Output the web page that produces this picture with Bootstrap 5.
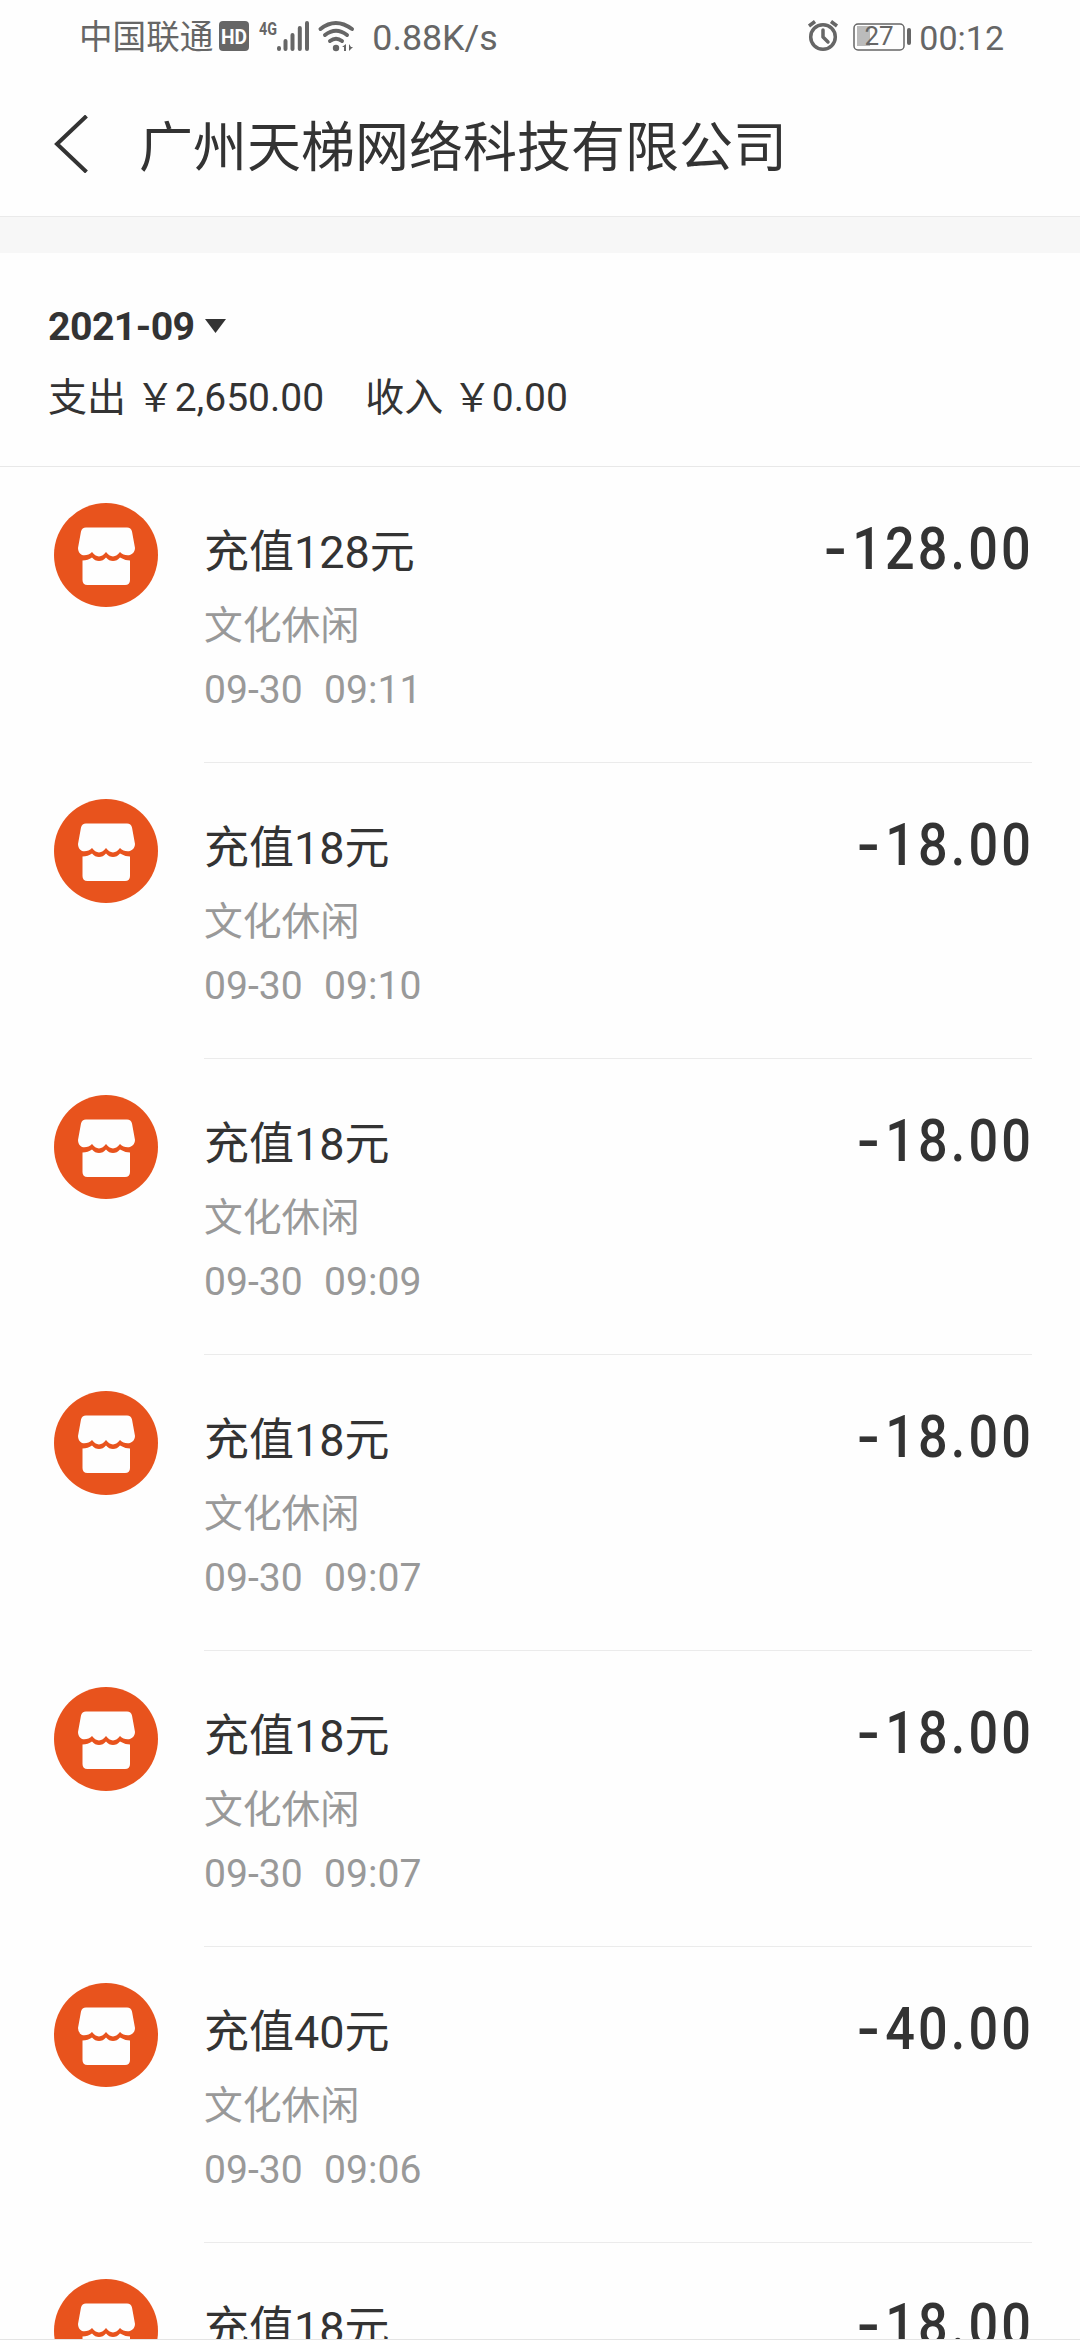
<!DOCTYPE html>
<html lang="zh-CN">
<head>
<meta charset="utf-8">
<meta name="viewport" content="width=device-width, initial-scale=1">
<title>广州天梯网络科技有限公司</title>
<link href="https://cdn.jsdelivr.net/npm/bootstrap@5.3.0/dist/css/bootstrap.min.css" rel="stylesheet">
<style>
body{font-family:Roboto,"Noto Sans CJK SC",sans-serif;color:#333;background:#fefefe}
.screen{width:1080px;height:2340px;background:#fefefe}
.statusbar{height:74px;padding:0 76px 0 79px;color:#666;font-size:35.8px;line-height:76px}
.carrier{font-size:33.6px}
.speed{margin-left:17px}
.clock{font-size:34px;margin-left:4px}
.topbar{height:142px;padding-left:54px}
.back{margin-top:41px}
.page-title{font-size:54px;line-height:80px;margin:35px 0 0 51px;font-weight:400}
.band{height:37px;background:#f7f7f7;border-top:1px solid #eaeaea}
.summary{height:214px;padding:54px 48px 0;border-bottom:1px solid #e8e8e8}
.month{font-size:39.3px;line-height:40px;font-weight:700;letter-spacing:-.6px}
.caret{margin:-3px 0 0 10px}
.totals{font-size:39px;line-height:58px;margin-top:22px;gap:41px}
.entry{height:296px;padding:36px 48px 0 54px}
.shop{width:104px;height:104px;margin-right:46px}
.entry-body{height:260px;border-bottom:1px solid #ebebeb}
.item-name{font-size:45px;line-height:60px;margin-top:20px}
.item-sub{font-size:38.8px;line-height:50px;color:#999}
.kind{margin-top:18px}
.when{font-size:39.1px;margin-top:14px;white-space:pre;word-spacing:1px}
.amount{font-size:60px;font-weight:500;line-height:60px;letter-spacing:3.6px;transform:scaleX(.87);transform-origin:right;margin:16px -2px 0 0}
.minus{display:inline-block;transform:scaleX(1.28);transform-origin:center;margin-right:5px}
.footline{height:1px;background:#e4e4e4}
</style>
<script src="https://cdn.jsdelivr.net/npm/bootstrap@5.3.0/dist/js/bootstrap.bundle.min.js"></script>
</head>
<body>
<svg class="d-none">
  <symbol id="shop" viewBox="0 0 104 104">
    <circle cx="52" cy="52" r="52" fill="#e8531d"/>
    <path fill="#fefefe" d="M32 24.500H73Q77 24.500 78 28.500L81 45Q81 50 76 52Q70 53 66 49Q63 53 59 53.500Q55 53 52 49Q49 53 45 53.500Q41 53 38 49Q34 53 28 52Q24 50 24 45L27 28.500Q28 24.500 32 24.500Z"/>
    <path fill="#fefefe" d="M28.500 57.500Q34 57.500 38 54.500Q41 58 45 58Q49 58 52 54.500Q55 58 59 58Q63 58 66 54.500Q71 57.500 76 57.500V77Q76 82 71 82H33.500Q28.500 82 28.500 77Z"/>
  </symbol>
</svg>
<div class="screen d-flex flex-column overflow-hidden">
  <header class="statusbar d-flex justify-content-between flex-shrink-0">
    <div class="d-flex">
      <span class="carrier">中国联通</span>
      <svg width="142" height="74" viewBox="0 0 142 74" fill="#666">
        <rect x="6" y="21" width="30" height="30" rx="4"/>
        <text x="21" y="43.500" font-size="20" font-weight="700" text-anchor="middle" textLength="26" lengthAdjust="spacingAndGlyphs" fill="#fefefe">HD</text>
        <text x="46" y="34.500" font-size="18.500" font-weight="700" textLength="18" lengthAdjust="spacingAndGlyphs">4G</text>
        <g stroke="#666" stroke-width="4" stroke-linecap="round"><path d="M66 48v1M72.500 41v8M79.500 35v14M86.800 28v21M94 23v26"/></g>
        <g fill="none" stroke="#666" stroke-width="4" stroke-linecap="round"><path d="M107.500 29Q122.500 17 139 29M112 35Q123 26.500 134 35M117 41Q123 36.500 129 41"/></g>
        <circle cx="123" cy="48" r="3.200"/><path d="M129 47l4-3v7h-2v-4zM136 44v7l4-4h-2z"/>
      </svg>
      <span class="speed">0.88K/s</span>
    </div>
    <div class="d-flex">
      <svg width="112" height="74" viewBox="0 0 112 74" fill="none" stroke="#666">
        <circle cx="20" cy="37" r="12.300" stroke-width="3.500"/>
        <path d="M20 30v7l5 5" stroke-width="3.500" stroke-linecap="round" stroke-linejoin="round"/>
        <path d="M6 26l6-4.500M34 26l-6-4.500" stroke-width="3.500"/>
        <rect x="51" y="24" width="50" height="26" rx="4" stroke-width="1.500"/>
        <rect x="54" y="26" width="13" height="20" fill="#bbb" stroke="none"/>
        <text x="76" y="45" font-size="26" text-anchor="middle" fill="#666" stroke="none">27</text>
        <path d="M106 30v13" stroke-width="4" stroke-linecap="round"/>
      </svg>
      <span class="clock">00:12</span>
    </div>
  </header>
  <nav class="topbar d-flex align-items-start flex-shrink-0">
    <svg class="back" width="34" height="58" viewBox="0 0 34 58"><path d="M32.500 1L3 29L32.500 57" fill="none" stroke="#333" stroke-width="4"/></svg>
    <h1 class="page-title">广州天梯网络科技有限公司</h1>
  </nav>
  <div class="band flex-shrink-0"></div>
  <section class="summary flex-shrink-0">
    <div class="month d-flex align-items-center">2021-09<svg class="caret" width="21" height="14"><path d="M0 0H21L10.500 14Z" fill="#333"/></svg></div>
    <div class="totals d-flex"><span>支出 ￥2,650.00</span><span>收入 ￥0.00</span></div>
  </section>
  <main class="flex-grow-1 overflow-hidden">
    <article class="entry d-flex"><svg class="shop flex-shrink-0"><use href="#shop"/></svg><div class="entry-body d-flex flex-grow-1 justify-content-between"><div><div class="item-name">充值128元</div><div class="item-sub kind">文化休闲</div><div class="item-sub when">09-30  09:11</div></div><div class="amount"><span class="minus">-</span>128.00</div></div></article>
    <article class="entry d-flex"><svg class="shop flex-shrink-0"><use href="#shop"/></svg><div class="entry-body d-flex flex-grow-1 justify-content-between"><div><div class="item-name">充值18元</div><div class="item-sub kind">文化休闲</div><div class="item-sub when">09-30  09:10</div></div><div class="amount"><span class="minus">-</span>18.00</div></div></article>
    <article class="entry d-flex"><svg class="shop flex-shrink-0"><use href="#shop"/></svg><div class="entry-body d-flex flex-grow-1 justify-content-between"><div><div class="item-name">充值18元</div><div class="item-sub kind">文化休闲</div><div class="item-sub when">09-30  09:09</div></div><div class="amount"><span class="minus">-</span>18.00</div></div></article>
    <article class="entry d-flex"><svg class="shop flex-shrink-0"><use href="#shop"/></svg><div class="entry-body d-flex flex-grow-1 justify-content-between"><div><div class="item-name">充值18元</div><div class="item-sub kind">文化休闲</div><div class="item-sub when">09-30  09:07</div></div><div class="amount"><span class="minus">-</span>18.00</div></div></article>
    <article class="entry d-flex"><svg class="shop flex-shrink-0"><use href="#shop"/></svg><div class="entry-body d-flex flex-grow-1 justify-content-between"><div><div class="item-name">充值18元</div><div class="item-sub kind">文化休闲</div><div class="item-sub when">09-30  09:07</div></div><div class="amount"><span class="minus">-</span>18.00</div></div></article>
    <article class="entry d-flex"><svg class="shop flex-shrink-0"><use href="#shop"/></svg><div class="entry-body d-flex flex-grow-1 justify-content-between"><div><div class="item-name">充值40元</div><div class="item-sub kind">文化休闲</div><div class="item-sub when">09-30  09:06</div></div><div class="amount"><span class="minus">-</span>40.00</div></div></article>
    <article class="entry d-flex"><svg class="shop flex-shrink-0"><use href="#shop"/></svg><div class="entry-body d-flex flex-grow-1 justify-content-between"><div><div class="item-name">充值18元</div></div><div class="amount"><span class="minus">-</span>18.00</div></div></article>
  </main>
  <div class="footline flex-shrink-0"></div>
</div>
</body>
</html>
